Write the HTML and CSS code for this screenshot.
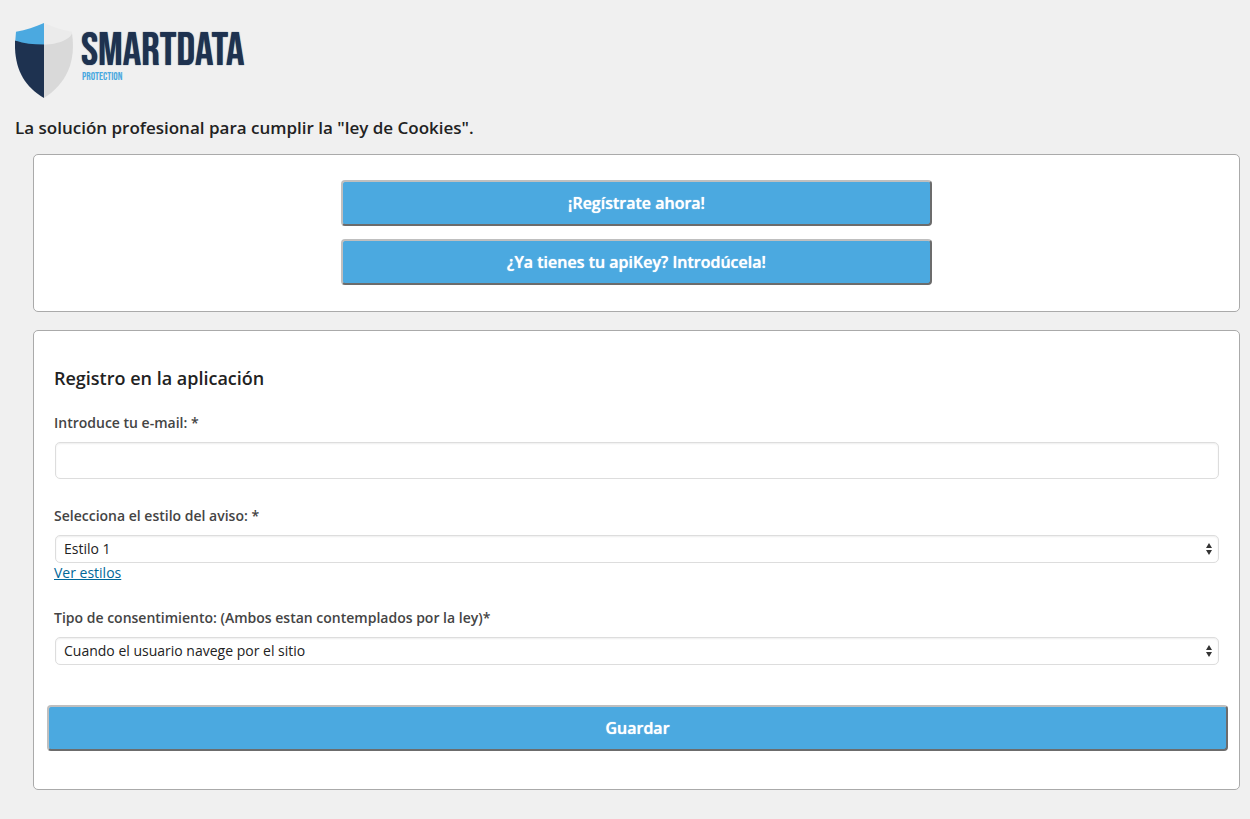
FILE: index.html
```html
<!DOCTYPE html>
<html lang="es">
<head>
<meta charset="utf-8">
<meta name="viewport" content="width=device-width, initial-scale=1">
<title>SmartData Protection</title>
<link rel="stylesheet" href="styles.css">
</head>
<body>
<header class="header">
  <div class="brand">
    <svg class="brand-shield" viewBox="0 0 58 75" aria-hidden="true">
      <path fill="#1e3250" d="M0 17.500L29 19V75C9 63-1 46 0 17.500Z"/>
      <path fill="#d9d9d9" d="M29 19L57 10C59 24 58 37 53 48C48 59 40 68 29 75Z"/>
      <path fill="#4ba9e0" d="M29 0V21.500C18 21.500 9 20.500 0.300 17.500L1 8.700C11 7 20 4 29 0Z"/>
      <path fill="#ebebeb" d="M29 0C38 4 47 7 57 8.700C58 15 44 21.500 29 21.500Z"/>
    </svg>
    <div class="brand-text">
      <span class="brand-name">SMARTDATA</span>
      <span class="brand-sub">PROTECTION</span>
    </div>
  </div>
  <h1 class="tagline">La solución profesional para cumplir la "ley de Cookies".</h1>
</header>
<main class="panels">
  <section class="panel panel-actions">
    <button class="button button-half" type="button">¡Regístrate ahora!</button>
    <button class="button button-half" type="button">¿Ya tienes tu apiKey? Introdúcela!</button>
  </section>
  <form class="panel panel-form">
    <div class="fields">
      <h2 class="title">Registro en la aplicación</h2>
      <div class="field">
        <label class="label" for="email">Introduce tu e-mail: *</label>
        <div class="control-box">
          <input class="control control-text" id="email" type="email">
        </div>
      </div>
      <div class="field">
        <label class="label" for="style">Selecciona el estilo del aviso: *</label>
        <div class="control-box">
          <select class="control control-select" id="style"><option>Estilo 1</option></select>
          <svg class="arrows" viewBox="0 0 6 12" aria-hidden="true"><path d="M3 0L6 5H0ZM3 12L0 7H6Z"/></svg>
        </div>
        <a class="link" href="#estilos">Ver estilos</a>
      </div>
      <div class="field">
        <label class="label" for="consent">Tipo de consentimiento: (Ambos estan contemplados por la ley)*</label>
        <div class="control-box">
          <select class="control control-select" id="consent"><option>Cuando el usuario navege por el sitio</option></select>
          <svg class="arrows" viewBox="0 0 6 12" aria-hidden="true"><path d="M3 0L6 5H0ZM3 12L0 7H6Z"/></svg>
        </div>
      </div>
    </div>
    <button class="button" type="submit">Guardar</button>
  </form>
</main>
</body>
</html>
```
FILE: styles.css
```css
* { box-sizing: border-box; }
body {
  margin: 0;
  padding: 23px 10px 29px 15px;
  background: #f0f0f0;
  color: #444;
  font: 14px/20px "Open Sans", sans-serif;
}
.brand { display: flex; gap: 8px; }
.brand-shield { width: 58px; height: 75px; }
.brand-text { display: flex; flex-direction: column; gap: 4px; padding-top: 14px; }
.brand-name {
  color: #1e3250;
  font: 46px/30px "Bebas Neue", "Roboto Condensed", "Liberation Sans", sans-serif;
  text-shadow: 0 0 1px #1e3250;
}
.brand-sub {
  padding-left: 1px;
  color: #4ba9e0;
  font: 11px/12px "Bebas Neue", "Roboto Condensed", "Liberation Sans", sans-serif;
}
.tagline {
  margin: 18px 0 14px;
  color: #222;
  font-size: 17px;
  font-weight: 600;
  line-height: 24px;
}
.panels { display: flex; flex-direction: column; gap: 18px; padding-left: 18px; }
.panel {
  display: flex;
  flex-direction: column;
  border: 1px solid #aaa;
  border-radius: 5px;
  background: #fff;
}
.panel-actions { align-items: center; gap: 13px; padding: 25px 12px 26px; }
.panel-form { gap: 40px; padding: 34px 11px 38px 13px; }
.button {
  width: 100%;
  height: 46px;
  border: 2px solid;
  border-color: #bfbfbf #6c6c6c #6c6c6c #bfbfbf;
  border-radius: 4px;
  background: #4ba9e0;
  color: #fff;
  font: 600 16px/24px "Open Sans", sans-serif;
  text-shadow: 0 0 1px #fff;
}
.button-half { width: 50%; }
.fields { display: flex; flex-direction: column; padding: 0 9px 0 7px; }
.title { margin: 0 0 22px; color: #222; font-size: 18px; font-weight: 600; line-height: 26px; }
.field { display: flex; flex-direction: column; align-items: flex-start; }
.field + .field { margin-top: 27px; }
.field:last-child { margin-top: 25px; }
.label { margin-bottom: 9px; font-weight: 600; line-height: 20px; }
.control {
  display: block;
  width: 100%;
  border: 1px solid #ddd;
  border-radius: 5px;
  background: #fff;
  box-shadow: inset 0 1px 2px rgba(0, 0, 0, 0.07);
  color: #222;
  font: 14px/20px "Open Sans", sans-serif;
}
.control-text { height: 37px; padding: 0 8px; }
.control-select { height: 28px; padding: 0 24px 0 8px; appearance: none; }
.control-box { position: relative; width: 100%; padding-left: 1px; }
.arrows { position: absolute; top: 8px; right: 7px; width: 6px; height: 12px; fill: #333; pointer-events: none; }
.link { color: #006799; }
```
